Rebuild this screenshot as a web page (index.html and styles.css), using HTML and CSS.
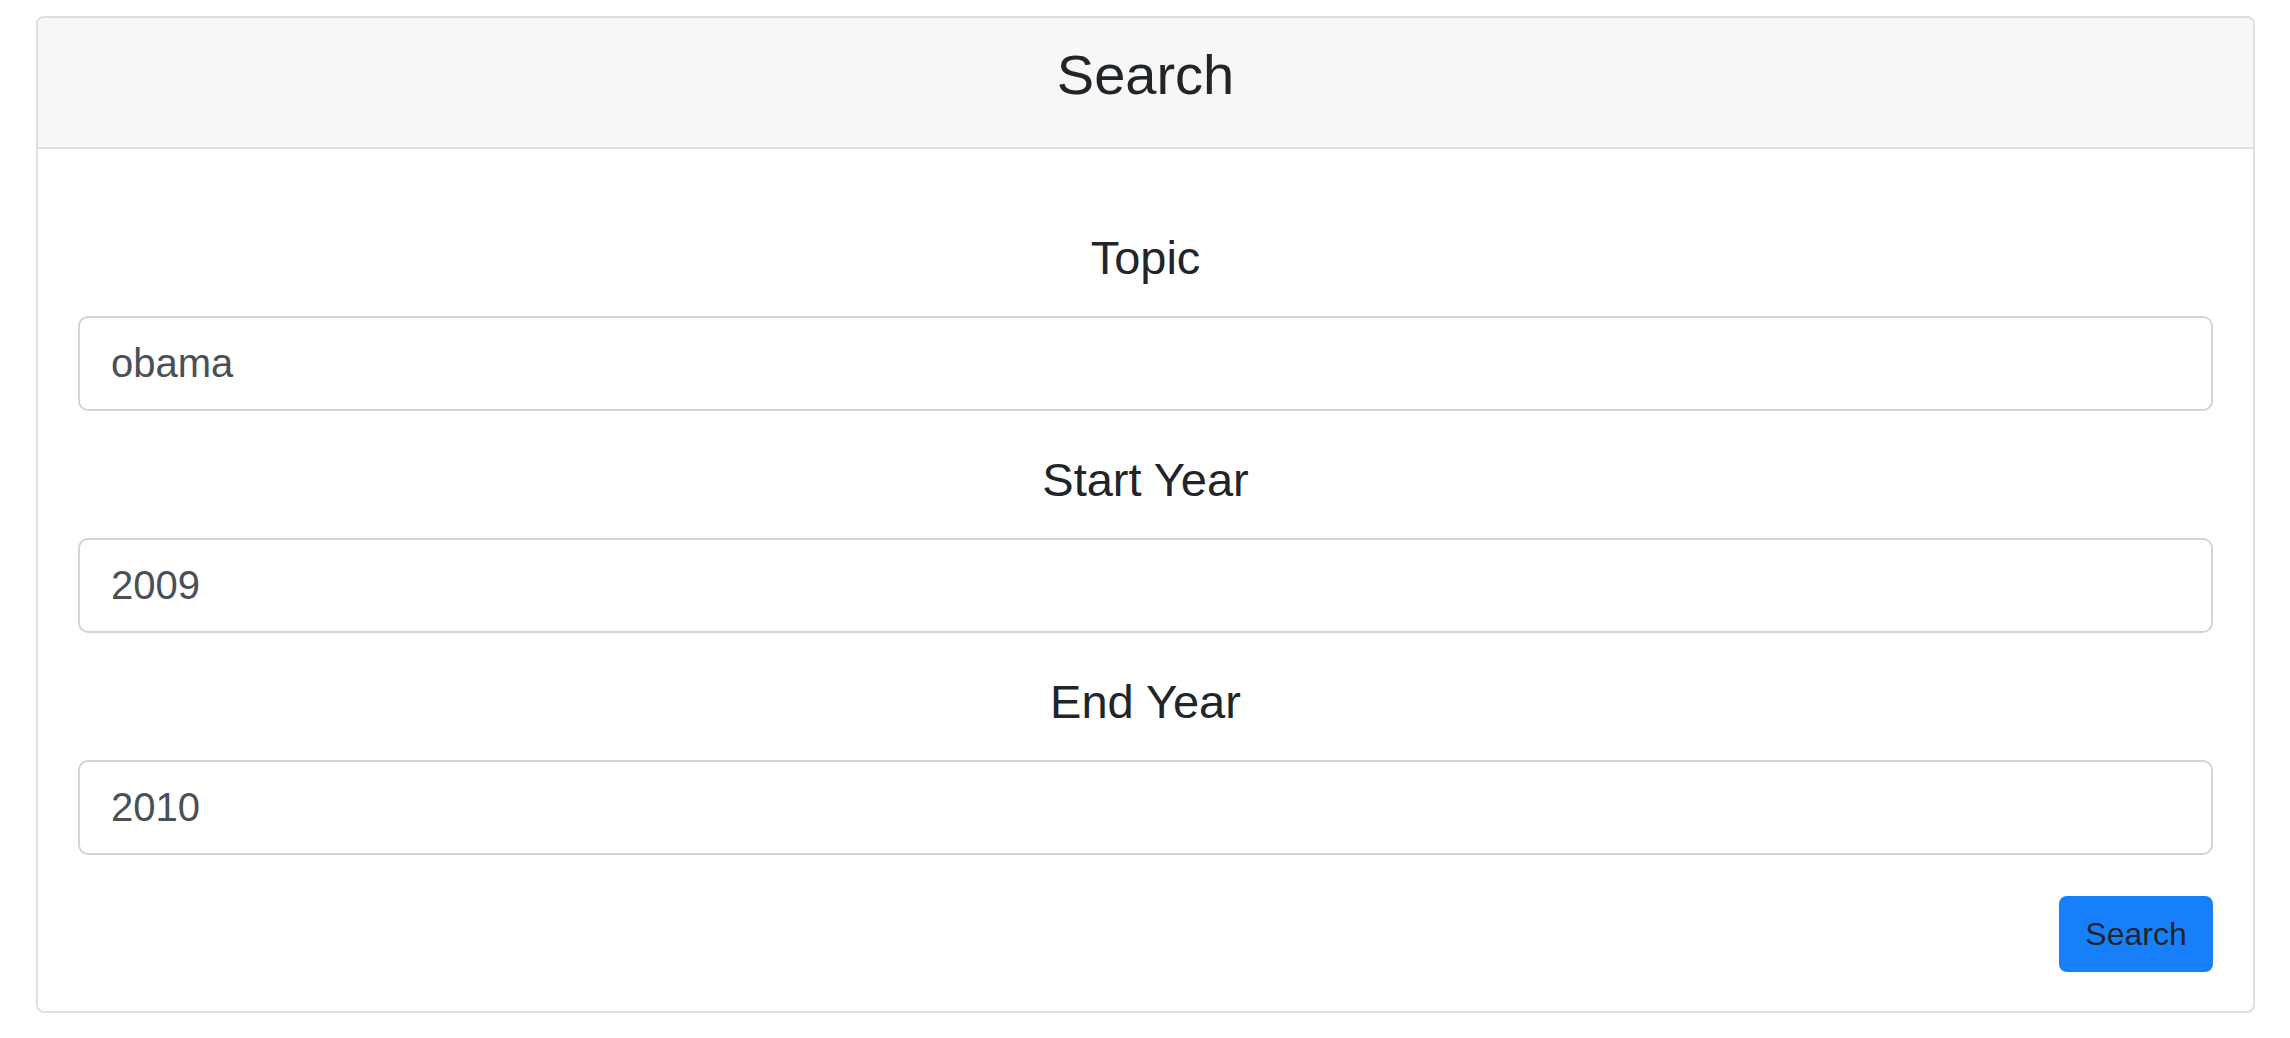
FILE: index.html
```html
<!DOCTYPE html>
<html>
<head>
<meta charset="utf-8">
<link rel="stylesheet" href="styles.css">
</head>
<body>
<div class="card">
  <div class="card-header">
    <h3 class="title">Search</h3>
  </div>
  <form class="card-body">
    <div class="form-group">
      <label class="label">Topic</label>
      <input class="input" type="text" value="obama">
    </div>
    <div class="form-group">
      <label class="label">Start Year</label>
      <input class="input" type="text" value="2009">
    </div>
    <div class="form-group">
      <label class="label">End Year</label>
      <input class="input" type="text" value="2010">
    </div>
    <div class="actions">
      <button class="btn" type="button">Search</button>
    </div>
  </form>
</div>
</body>
</html>
```
FILE: styles.css
```css
html, body {
  margin: 0;
  padding: 0;
  background: #ffffff;
}
body {
  font-family: "Liberation Sans", Arial, Helvetica, sans-serif;
  color: #212529;
  padding: 16px 35px 0 36px;
}
.card {
  border: 2px solid #dfdfdf;
  border-radius: 8px;
  overflow: hidden;
  display: flex;
  flex-direction: column;
}
.card-header {
  background: #f7f7f7;
  border-bottom: 2px solid #dfdfdf;
  padding: 24px 40px 24px;
}
.title {
  margin: 0 0 15px 0;
  font-size: 56px;
  line-height: 66px;
  font-weight: 400;
  text-align: center;
  color: #212529;
}
.card-body {
  display: flex;
  flex-direction: column;
  padding: 40px 40px 39px 40px;
  margin: 0;
}
.form-group {
  display: flex;
  flex-direction: column;
  padding-top: 41px;
}
.label {
  display: block;
  font-size: 47px;
  line-height: 56px;
  text-align: center;
  color: #212529;
  margin-bottom: 30px;
}
.input {
  box-sizing: border-box;
  height: 95px;
  border: 2px solid #d0d4d8;
  border-radius: 10px;
  padding: 0 31px;
  font-family: "Liberation Sans", Arial, Helvetica, sans-serif;
  font-size: 40px;
  color: #495057;
  background: #fff;
  outline: none;
}
.actions {
  display: flex;
  justify-content: flex-end;
  padding-top: 41px;
}
.btn {
  box-sizing: border-box;
  width: 154px;
  height: 76px;
  background: #187ffb;
  border: none;
  border-radius: 8px;
  font-family: "Liberation Sans", Arial, Helvetica, sans-serif;
  font-size: 32px;
  color: #212529;
  padding: 0;
}
```
